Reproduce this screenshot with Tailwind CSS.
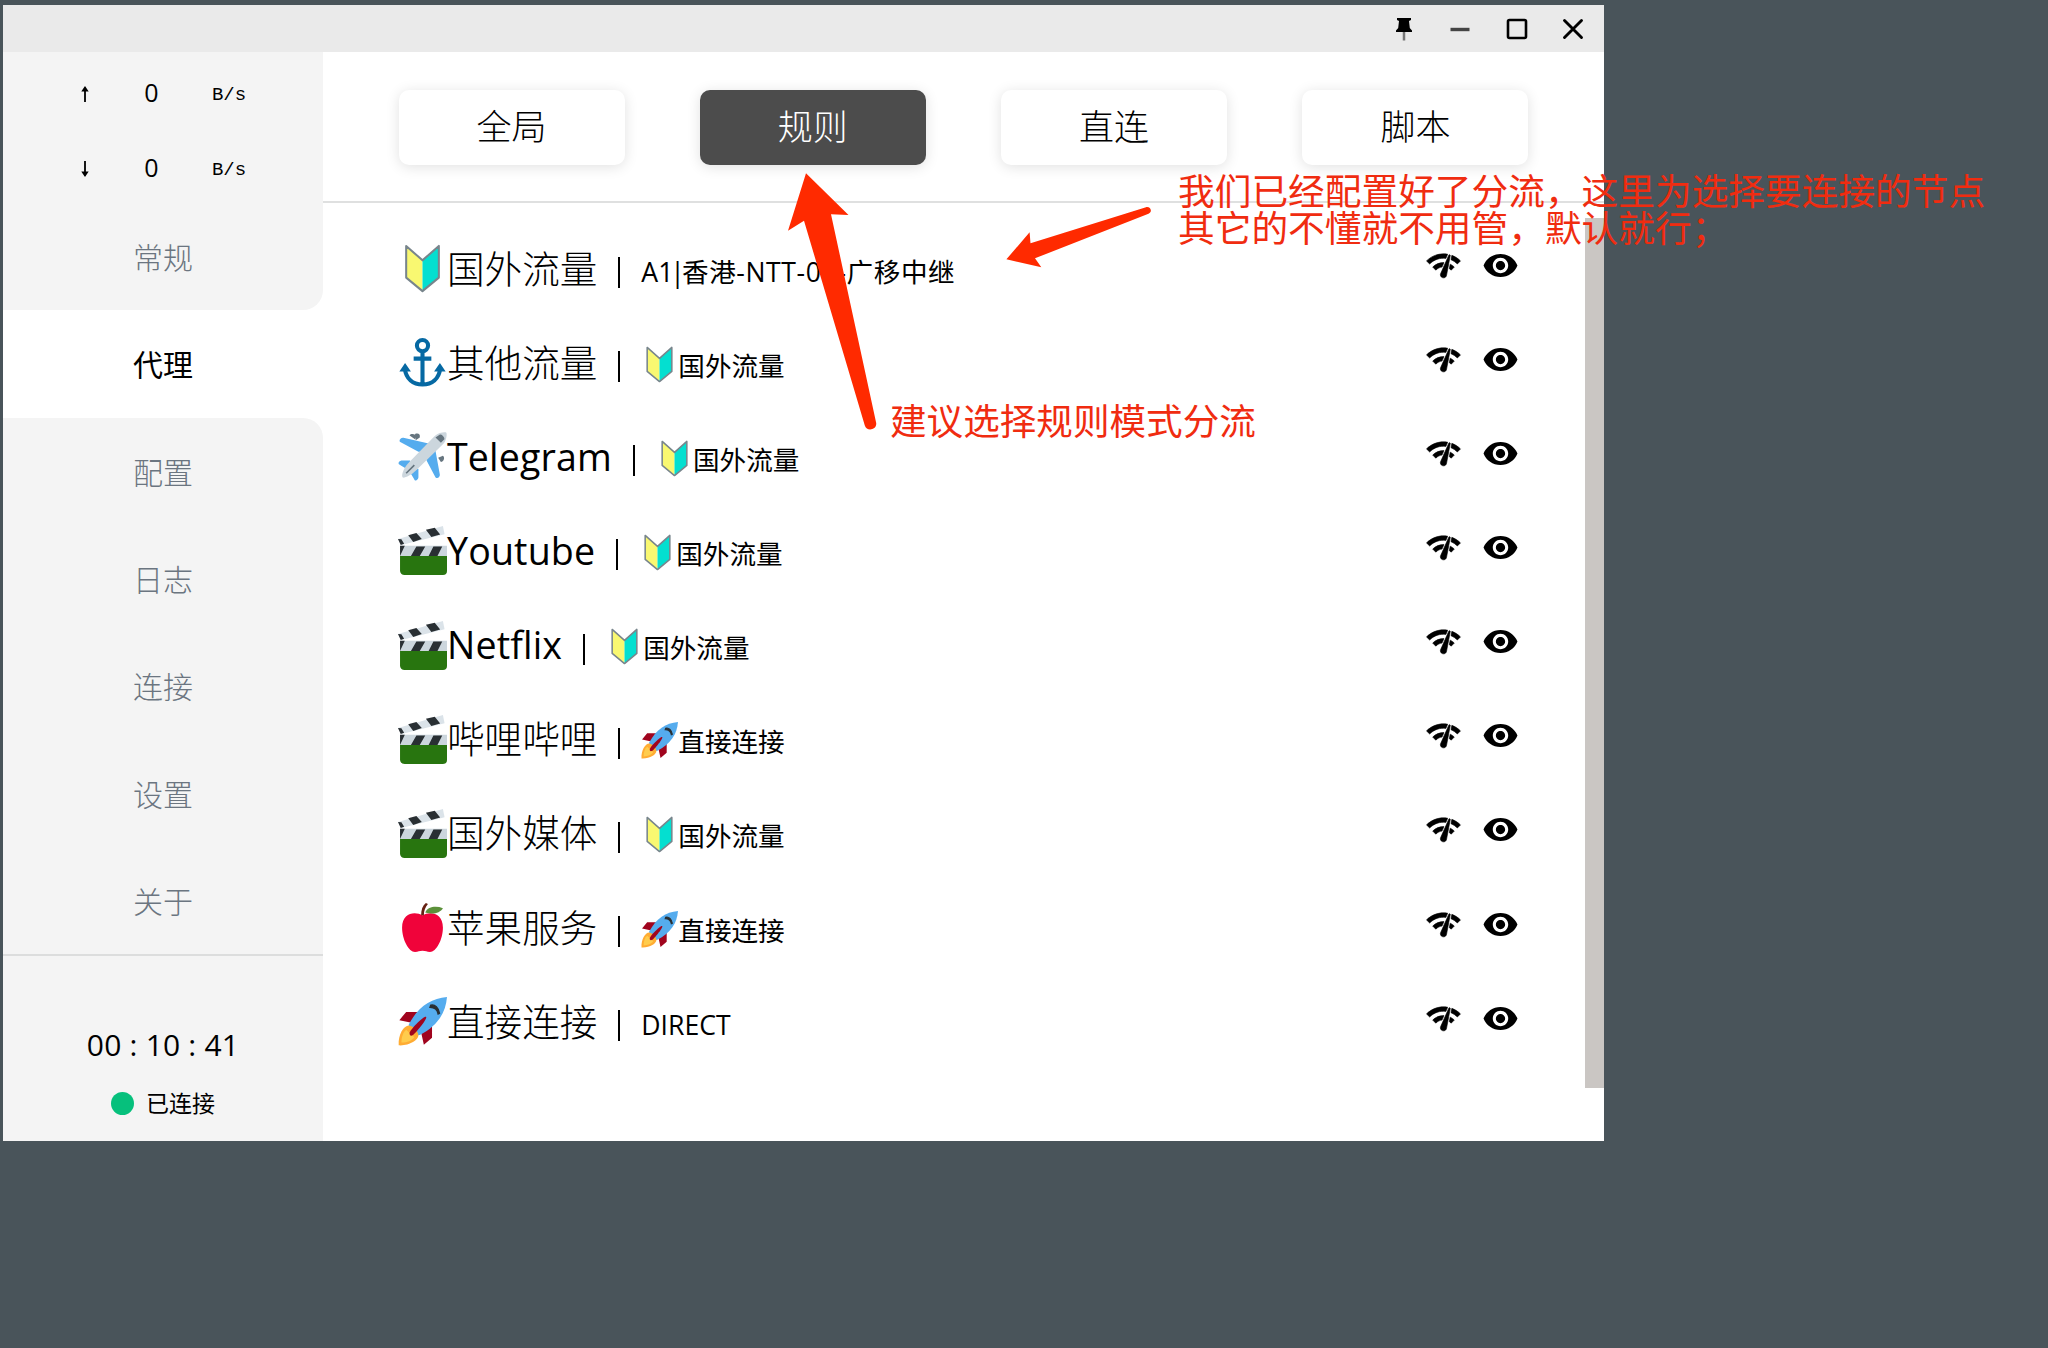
<!DOCTYPE html>
<html lang="zh-CN">
<head>
<meta charset="utf-8">
<title>代理</title>
<script src="https://cdn.jsdelivr.net/npm/@tailwindcss/browser@4"></script>
</head>
<body class="relative h-[1348px] w-[2048px] overflow-hidden bg-[#49545a] pt-[5px] pl-[3px] font-['Open_Sans','Noto_Sans_CJK_SC',sans-serif] text-black">
<svg width="0" height="0" class="absolute">
  <defs>
    <symbol id="shield" viewBox="0 0 36 36">
      <path d="M6 1.6 18 12v22.4L6 24.6z" fill="#f9f871"/><path d="M30 1.6 18 12v22.4l12-9.8z" fill="#04dfd0"/>
      <path d="M6 1.4 18 12 30 1.4v23.3L18 34.6 6 24.7z" fill="none" stroke="#78858c" stroke-width="1.5" stroke-linejoin="round"/>
    </symbol>
    <symbol id="anchor" viewBox="0 0 36 36">
      <g fill="none" stroke="#0669a3" stroke-width="3"><circle cx="18" cy="5.6" r="4.1"/><path d="M18 9.5V34M5 22.5C6 30 11 34.200 18 34.200S30 30 31 22.500"/></g>
      <path d="M11.500 13.500h13v3.200h-13zM1 24.600l4.200-6.200 4.300 6.200zM35 24.600l-4.200-6.200-4.300 6.200z" fill="#0669a3"/>
    </symbol>
    <symbol id="plane" viewBox="0 0 36 36">
      <path d="M8.500 5.500c1-2 5-1 5 .8l-1 2z" fill="#66757f" transform="translate(0 -3)"/>
      <path d="M12.500 1.500c2.500-1 4 .3 3.500 2.500l-3 2zM33 17.500c1.800 1.500.5 4.500-1.500 4.500l-2-3z" fill="#66757f"/>
      <path d="M21 14.500 22.500 8.500 4 4.300c-2-.5-4 2.400-2 3.300L15 14.500zM21.500 15l6-1.500 3.200 17.500c.5 2-2.400 4-3.300 2L21 21z" fill="#55acee"/>
      <path d="M9 21 2.500 21c-2 .4-3 2.500-1 3.200L7 27.500zM15 27v6.500c-.4 2-2.500 3-3.200 1L8.500 29z" fill="#55acee"/>
      <path d="M27 3c3-3 8-3 8.500-2.500S36 6 33 9L13 28.500C10 31.500 5 34 3.500 33.500 2 32 4.500 26 7.500 23z" fill="#ccd6dd"/>
      <path d="M31 2.500c1 0 2.500 1.500 2.500 2.500l-2 2-3-2.800zM6 30.300l6-6" fill="#66757f" stroke="#66757f" stroke-width="1.200"/>
    </symbol>
    <symbol id="clapper" viewBox="0 0 36 36">
      <path d="M1.500 22H36v11a3 3 0 0 1-3 3H5a3.500 3.500 0 0 1-3.500-3z" fill="#28750f"/>
      <path d="M1.500 14.500H36V22H1.500z" fill="#ccd6dd"/><path d="M1.500 14.500V22L5 14.500zM13.500 15h6.500L16 22H9.500zM26 15h6.500L29 22h-6.500z" fill="#292f33"/>
      <path d="M0 9.500 33 0l1.200 6L2.500 14z" fill="#dbe3e9"/>
      <path d="M0 9.500l2.500 .2 2 3.300-2.500 1zM7.500 6.800l6-1.700 4 4.500-6.300 2.200zM20.500 2.800l6.500-1.500 4 5-6.500 1.800z" fill="#292f33"/>
    </symbol>
    <symbol id="apple" viewBox="0 0 36 36">
      <path d="M18 9C13 6 3 6.500 3 18c0 9 5 18 9.500 18 2.500 0 3-.9 5.500-.9s3 .9 5.500.9C28 36 33 27 33 18 33 6.500 23 6 18 9z" fill="#f0033a"/>
      <path d="M17 9c0-4 1-7 3.500-9l1.500.8C20 3 19 6 19 9z" fill="#662113"/>
      <path d="M20 7c2-4.500 8-5 13-3.200C31 7 26 9 20 7z" fill="#5c913b"/>
    </symbol>
    <symbol id="rocket" viewBox="0 0 36 36">
      <path d="M1 17l5-6 9 0-5 8zM19 35l6-5v-9l-8 5z" fill="#a0041e"/>
      <path d="M36 0C24 1 15 7 8 20c-.5 1 .5 3 2.500 5s4 3.500 5.500 3C29 21 35 12 36 0z" fill="#55acee"/>
      <path d="M8 21c-4 0-8 7-7.500 14.500C8 36 15 32 15 28c-1-4-3-6-7-7z" fill="#ffac33"/><path d="M6 24c-2 1.500-3.500 5-3.500 9.500C7 33.500 10 32 12 29.500z" fill="#ffcc4d"/>
      <path d="M8.500 26.500c0-2 10-12.500 12-12s-7 11.500-9.500 13.500c-1.500.8-2.500.5-2.500-1.500z" fill="#a0041e"/>
      <path d="M24 6c3-1 6 2 6.500 6l-1 .5C29 9.500 27 7.500 23.500 7.500z" fill="#292f33" stroke="#292f33"/>
    </symbol>
    <symbol id="check" viewBox="0 0 24 24"><path stroke="currentColor" stroke-width=".4" stroke-linejoin="round" d="M15.900 5c-.17 0-.32.09-.41.23l-.07.15-5.180 11.650c-.16.29-.26.61-.26.96 0 1.110.9 2.010 2.010 2.010.96 0 1.770-.68 1.960-1.590l.01-.03L16.400 5.500c0-.28-.22-.5-.5-.5zM1 9l2 2c2.880-2.880 6.790-4.080 10.530-3.620l1.190-2.680C9.890 3.840 4.740 5.270 1 9zm20 2l2-2c-1.640-1.640-3.550-2.820-5.590-3.570l-.53 2.820c1.500.62 2.900 1.530 4.120 2.750zm-4 4l2-2c-.8-.8-1.700-1.420-2.660-1.890l-.55 2.920c.42.27.83.59 1.210.97zM5 13l2 2c1.130-1.130 2.560-1.790 4.030-2l1.280-2.880c-2.630-.08-5.300.87-7.310 2.880z"/></symbol>
    <symbol id="eye" viewBox="0 0 24 24"><path d="M12 4.500C7 4.500 2.730 7.610 1 12c1.730 4.390 6 7.500 11 7.500s9.270-3.110 11-7.500c-1.730-4.390-6-7.500-11-7.500zM12 17c-2.760 0-5-2.240-5-5s2.240-5 5-5 5 2.240 5 5-2.240 5-5 5zm0-8c-1.660 0-3 1.340-3 3s1.340 3 3 3 3-1.340 3-3-1.340-3-3-3z"/></symbol>
  </defs>
</svg>

<div class="flex h-[1136px] w-[1601px] flex-col bg-white">
  <header class="flex h-[47px] shrink-0 items-center justify-end gap-[32.300px] bg-[#eaeaea] pt-[1px] pr-[19px]">
    <svg class="h-6 w-6" viewBox="0 0 24 24"><path d="M5 1h14v2l-2 1 .8 7L20 13.500V15H4v-1.500L6.200 11 7 4 5 3z"/><path d="M12 15v8.500" stroke="#777" stroke-width="2.500"/></svg>
    <svg class="h-6 w-6" viewBox="0 0 24 24"><path d="M2.500 12.500h19" stroke="#444" stroke-width="3.400"/></svg>
    <svg class="h-6 w-6" viewBox="0 0 24 24"><rect x="3" y="3" width="18" height="18" rx="1.500" fill="none" stroke="#000" stroke-width="2.600"/></svg>
    <svg class="h-6 w-6" viewBox="0 0 24 24"><path d="M3.500 3.500l17 17M20.500 3.500l-17 17" stroke="#000" stroke-width="2.900" stroke-linecap="round"/></svg>
  </header>
  <div class="flex min-h-0 flex-1">
    <aside class="flex w-[320px] shrink-0 flex-col text-center text-[30px] text-[#6b7580]">
      <div class="flex h-[258px] flex-col rounded-br-[20px] bg-[#f4f4f4]">
        <div class="mt-[4px] flex h-[75px] items-center text-black">
          <svg class="ml-[76px] h-5 w-3" viewBox="0 0 12 20"><path d="M6 18V3M4 6.500 6 3.500 8 6.500z" stroke="#000" stroke-width="1.800"/></svg>
          <span class="ml-[50px] w-[21px] pb-[2px] text-[25px]">0</span>
          <span class="ml-[49px] w-[36px] pt-[3px] font-['Liberation_Mono',monospace] text-[19px]">B/s</span>
        </div>
        <div class="flex h-[75px] items-center text-black">
          <svg class="ml-[76px] h-5 w-3" viewBox="0 0 12 20"><path d="M6 2v15M4 13.500 6 16.500 8 13.500z" stroke="#000" stroke-width="1.800"/></svg>
          <span class="ml-[50px] w-[21px] pb-[2px] text-[25px]">0</span>
          <span class="ml-[49px] w-[36px] pt-[3px] font-['Liberation_Mono',monospace] text-[19px]">B/s</span>
        </div>
        <a class="flex h-[103px] items-center justify-center font-light">常规</a>
      </div>
      <a class="flex h-[108px] shrink-0 items-center justify-center pt-[1px] text-black">代理</a>
      <div class="flex flex-1 flex-col rounded-tr-[20px] bg-[#f4f4f4] font-light">
        <a class="flex h-[107.300px] items-center justify-center pt-px">配置</a>
        <a class="flex h-[107.300px] items-center justify-center pt-px">日志</a>
        <a class="flex h-[107.300px] items-center justify-center pt-px">连接</a>
        <a class="flex h-[107.300px] items-center justify-center pt-px">设置</a>
        <a class="flex h-[107.300px] items-center justify-center pt-px">关于</a>
        <div class="flex flex-1 flex-col border-t-2 border-[#dcdddd] font-normal text-black">
          <div class="mt-[69px] h-10 text-[30px] leading-10 font-medium tracking-[0.200px] whitespace-pre">00 : 10 : 41</div>
          <div class="mt-[22px] flex items-center justify-center gap-[12px] text-[23px] leading-[32px]"><span class="h-[23px] w-[23px] rounded-full bg-[#06c07c]"></span>已连接</div>
        </div>
      </div>
    </aside>
    <main class="flex flex-1 flex-col">
      <div class="flex h-[151px] shrink-0 gap-[75.300px] border-b-2 border-[#dfe0e0] pt-[38px] pl-[75.500px] text-[35px] font-light">
        <button class="h-[75px] w-[226px] rounded-[10px] bg-white shadow-[0_2px_14px_rgba(0,0,0,0.12)]">全局</button>
        <button class="h-[75px] w-[226px] rounded-[10px] bg-[#4c4c4c] text-white shadow-[0_2px_14px_rgba(0,0,0,0.12)]">规则</button>
        <button class="h-[75px] w-[226px] rounded-[10px] bg-white shadow-[0_2px_14px_rgba(0,0,0,0.12)]">直连</button>
        <button class="h-[75px] w-[226px] rounded-[10px] bg-white shadow-[0_2px_14px_rgba(0,0,0,0.12)]">脚本</button>
      </div>
      <div class="flex flex-1">
        <ul id="rows" class="flex-1 pt-[18.500px] pl-[75px]"></ul>
        <div class="mt-[15px] h-[870px] w-[19px] bg-[#cac6c3]"></div>
      </div>
    </main>
  </div>
</div>

<svg class="absolute inset-0" width="2048" height="1348" viewBox="0 0 2048 1348" fill="#ff2a00">
  <path d="M806 173.300 848.500 215l-17.500-.7L876.200 423c.8 7-9.600 9-11.400 2.500L804 220.700l-16 10z"/>
  <path d="M1006.400 259.300l23.200-27 .9 11L1146 207.200c4.500-1 7 4.500 2.500 6.500L1035 258.300l6.300 9z"/>
</svg>
<div class="absolute top-[170.500px] left-[1178px] font-['Noto_Sans_CJK_SC',sans-serif] text-[36.700px] leading-[37.300px] whitespace-nowrap text-[#f02c10]">我们已经配置好了分流，这里为选择要连接的节点<br>其它的不懂就不用管，默认就行；</div>
<div class="absolute top-[400.500px] left-[890px] font-['Noto_Sans_CJK_SC',sans-serif] text-[36.600px] leading-[37px] whitespace-nowrap text-[#f02c10]">建议选择规则模式分流</div>

<script>
const rows = [
  ['shield', '国外流量', '', '<span>A1</span><span class="-mx-[3px]">|</span><span class="tracking-[0.600px]">香港-NTT-01-广移中继</span>'],
  ['anchor', '其他流量', 'shield', '国外流量'],
  ['plane', 'Telegram', 'shield', '国外流量'],
  ['clapper', 'Youtube', 'shield', '国外流量'],
  ['clapper', 'Netflix', 'shield', '国外流量'],
  ['clapper', '哔哩哔哩', 'rocket', '直接连接'],
  ['clapper', '国外媒体', 'shield', '国外流量'],
  ['apple', '苹果服务', 'rocket', '直接连接'],
  ['rocket', '直接连接', '', 'DIRECT'],
];
document.getElementById('rows').innerHTML = rows.map(([icon, name, sub, value]) => `
  <li class="flex h-[94.150px] items-center">
    <svg class="h-[49px] w-[49px] shrink-0"><use href="#${icon}"/></svg>
    <span class="text-[37.600px] leading-[48px] whitespace-nowrap ${/[a-z]/.test(name) ? 'font-medium tracking-[0.150px]' : 'font-light'}">${name}</span>
    <span class="mt-[8px] ml-[21px] h-[31px] w-[2px] bg-black"></span>
    <span class="mt-[6px] ml-[21px] flex items-center text-[26.600px] leading-[36px] whitespace-nowrap">${sub ? `<svg class="-mt-[3px] h-[37px] w-[37px]"><use href="#${sub}"/></svg>` : ''}${value}</span>
    <svg class="mr-[20px] mb-[7px] ml-auto h-[37px] w-[37px]"><use href="#check"/></svg>
    <svg class="mr-[66px] mb-[7px] h-[37px] w-[37px]"><use href="#eye"/></svg>
  </li>`).join('');
</script>
</body>
</html>
